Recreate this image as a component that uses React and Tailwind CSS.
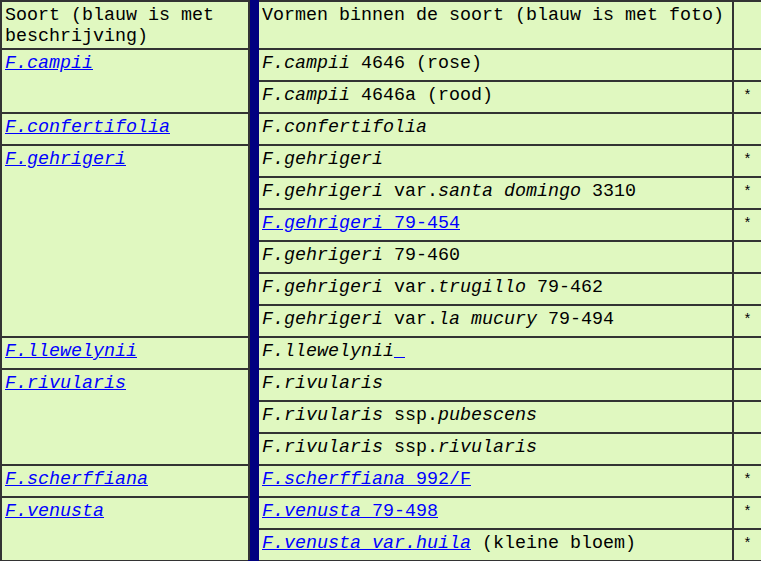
const cell = "border-2 border-[#333333] align-top px-[3px] pt-[4px] pb-[4px] leading-[20px]";
const head = "border-2 border-[#333333] align-top px-[3px] pt-[3px] pb-0 leading-[21px]";
const link = "text-[#0000ff] underline";

const I = ({ children }) => <i>{children}</i>;

const groups = [
  {
    soort: "F.campii",
    rows: [
      { v: <><I>F.campii</I> 4646 (rose)</>, foto: false },
      { v: <><I>F.campii</I> 4646a (rood)</>, foto: true },
    ],
  },
  {
    soort: "F.confertifolia",
    rows: [{ v: <I>F.confertifolia</I>, foto: false }],
  },
  {
    soort: "F.gehrigeri",
    rows: [
      { v: <I>F.gehrigeri</I>, foto: true },
      { v: <><I>F.gehrigeri</I> var.<I>santa domingo</I> 3310</>, foto: true },
      { v: <a href="#" className={link}><I>F.gehrigeri</I> 79-454</a>, foto: true },
      { v: <><I>F.gehrigeri</I> 79-460</>, foto: false },
      { v: <><I>F.gehrigeri</I> var.<I>trugillo</I> 79-462</>, foto: false },
      { v: <><I>F.gehrigeri</I> var.<I>la mucury</I> 79-494</>, foto: true },
    ],
  },
  {
    soort: "F.llewelynii",
    rows: [
      {
        v: <><I>F.llewelynii</I><a href="#" className={`${link} whitespace-pre`}> </a></>,
        foto: false,
      },
    ],
  },
  {
    soort: "F.rivularis",
    rows: [
      { v: <I>F.rivularis</I>, foto: false },
      { v: <><I>F.rivularis</I> ssp.<I>pubescens</I></>, foto: false },
      { v: <><I>F.rivularis</I> ssp.<I>rivularis</I></>, foto: false },
    ],
  },
  {
    soort: "F.scherffiana",
    rows: [
      { v: <a href="#" className={link}><I>F.scherffiana</I> 992/F</a>, foto: true },
    ],
  },
  {
    soort: "F.venusta",
    rows: [
      { v: <a href="#" className={link}><I>F.venusta</I> 79-498</a>, foto: true },
      {
        v: <><a href="#" className={link}><I>F.venusta var.huila</I></a> (kleine bloem)</>,
        foto: true,
      },
    ],
  },
];

const totalRows = groups.reduce((n, g) => n + g.rows.length, 0) + 1;

export default function App() {
  return (
    <div className="w-[761px] h-[561px] overflow-hidden bg-white">
      <table
        className="border-collapse bg-[#e0f8c0] text-black text-[18.33px] w-[761px] table-fixed"
        style={{ fontFamily: '"Liberation Mono", "Courier New", monospace' }}
      >
        <colgroup>
          <col className="w-[248px]" />
          <col className="w-[9px]" />
          <col className="w-[475px]" />
          <col className="w-[29px]" />
        </colgroup>
        <tbody>
          <tr>
            <td className={head}>
              <div className="h-[43px] overflow-hidden">Soort (blauw is met beschrijving)</div>
            </td>
            <td rowSpan={totalRows} className="bg-[#000080] border-2 border-l-[#333333] border-y-[#000080] border-r-[#000080] p-0" />
            <td className={head}>
              <div className="h-[43px] overflow-hidden">Vormen binnen de soort (blauw is met foto)</div>
            </td>
            <td className={head}></td>
          </tr>
          {groups.map((g) =>
            g.rows.map((r, i) => (
              <tr key={g.soort + i} className="h-[32px]">
                {i === 0 && (
                  <td rowSpan={g.rows.length} className={cell}>
                    <a href="#" className={link}>
                      <I>{g.soort}</I>
                    </a>
                  </td>
                )}
                <td className={`${cell} whitespace-nowrap`}>{r.v}</td>
                <td className={`${cell} text-center text-[14px]`}>{r.foto ? "*" : ""}</td>
              </tr>
            ))
          )}
        </tbody>
      </table>
    </div>
  );
}
